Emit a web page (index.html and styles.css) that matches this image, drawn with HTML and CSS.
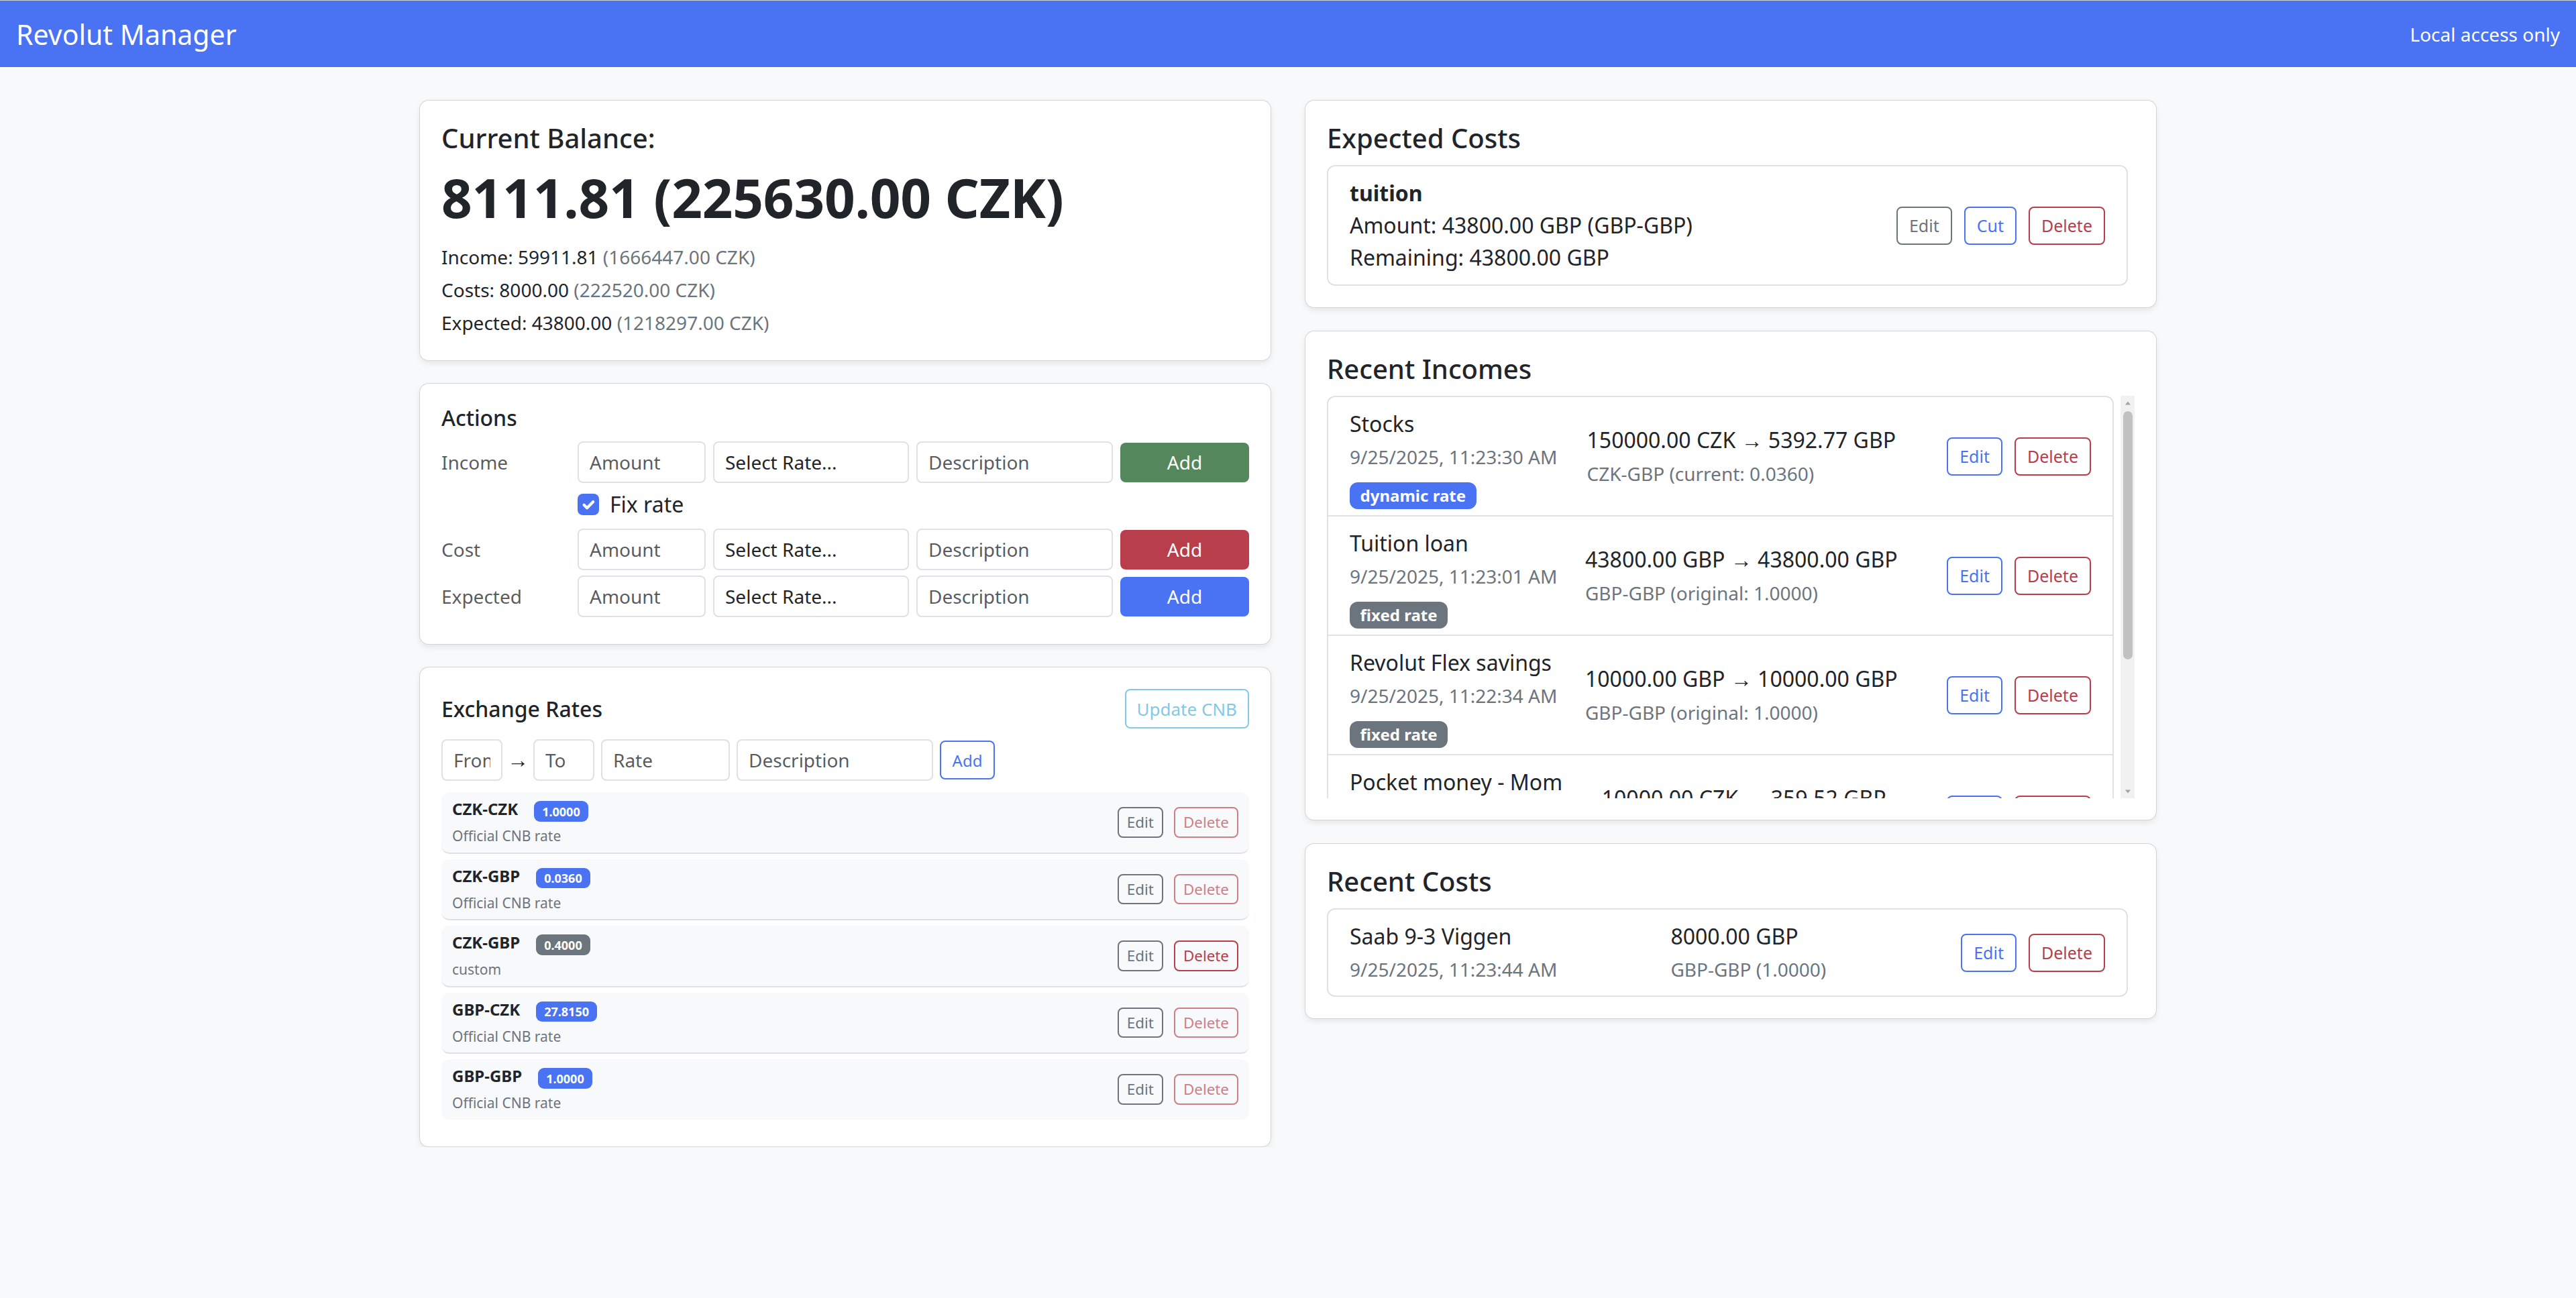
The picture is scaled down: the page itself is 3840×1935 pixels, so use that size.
FILE: index.html
```html
<!DOCTYPE html>
<html lang="en">
<head>
<meta charset="utf-8">
<title>Revolut Manager</title>
<link rel="stylesheet" href="styles.css">
</head>
<body>
<header class="topbar">
  <span class="brand">Revolut Manager</span>
  <span class="access">Local access only</span>
</header>

<main class="layout">
  <div class="col">
    <section class="card">
      <h5 class="card-title">Current Balance:</h5>
      <div class="balance-big">8111.81 (225630.00 CZK)</div>
      <div class="stat"><span class="sm">Income: 59911.81 <span class="muted">(1666447.00 CZK)</span></span></div>
      <div class="stat"><span class="sm">Costs: 8000.00 <span class="muted">(222520.00 CZK)</span></span></div>
      <div class="stat"><span class="sm">Expected: 43800.00 <span class="muted">(1218297.00 CZK)</span></span></div>
    </section>

    <section class="card">
      <h6 class="card-sub">Actions</h6>
      <div class="act-row">
        <label class="act-label">Income</label>
        <input class="field" placeholder="Amount">
        <select class="field sel"><option>Select Rate...</option></select>
        <input class="field" placeholder="Description">
        <button class="btn-add green">Add</button>
      </div>
      <div class="fix-row">
        <span class="check"><svg viewBox="0 0 20 20" width="32" height="32"><path d="M6 10.5l2.8 2.8L14.5 7.5" fill="none" stroke="#fff" stroke-width="2.6" stroke-linecap="round" stroke-linejoin="round"/></svg></span>
        <label class="fix-label">Fix rate</label>
      </div>
      <div class="act-row">
        <label class="act-label">Cost</label>
        <input class="field" placeholder="Amount">
        <select class="field sel"><option>Select Rate...</option></select>
        <input class="field" placeholder="Description">
        <button class="btn-add red">Add</button>
      </div>
      <div class="act-row">
        <label class="act-label">Expected</label>
        <input class="field" placeholder="Amount">
        <select class="field sel"><option>Select Rate...</option></select>
        <input class="field" placeholder="Description">
        <button class="btn-add blue">Add</button>
      </div>
    </section>

    <section class="card">
      <div class="rates-head">
        <h6 class="card-sub flush">Exchange Rates</h6>
        <button class="btn-update" disabled>Update CNB</button>
      </div>
      <div class="rate-form">
        <input class="field rf-from" placeholder="From">
        <span class="arrow">→</span>
        <input class="field rf-to" placeholder="To">
        <input class="field rf-rate" placeholder="Rate">
        <input class="field rf-desc" placeholder="Description">
        <button class="btn-outline-add">Add</button>
      </div>

      <div class="rate-item">
        <div class="ri-left">
          <div class="ri-name">CZK-CZK<span class="rbadge blue-bg">1.0000</span></div>
          <div class="ri-desc">Official CNB rate</div>
        </div>
        <div class="ri-btns"><button class="rbtn edit">Edit</button><button class="rbtn del" disabled>Delete</button></div>
      </div>
      <div class="rate-item">
        <div class="ri-left">
          <div class="ri-name">CZK-GBP<span class="rbadge blue-bg">0.0360</span></div>
          <div class="ri-desc">Official CNB rate</div>
        </div>
        <div class="ri-btns"><button class="rbtn edit">Edit</button><button class="rbtn del" disabled>Delete</button></div>
      </div>
      <div class="rate-item">
        <div class="ri-left">
          <div class="ri-name">CZK-GBP<span class="rbadge gray-bg">0.4000</span></div>
          <div class="ri-desc">custom</div>
        </div>
        <div class="ri-btns"><button class="rbtn edit">Edit</button><button class="rbtn del">Delete</button></div>
      </div>
      <div class="rate-item">
        <div class="ri-left">
          <div class="ri-name">GBP-CZK<span class="rbadge blue-bg">27.8150</span></div>
          <div class="ri-desc">Official CNB rate</div>
        </div>
        <div class="ri-btns"><button class="rbtn edit">Edit</button><button class="rbtn del" disabled>Delete</button></div>
      </div>
      <div class="rate-item">
        <div class="ri-left">
          <div class="ri-name">GBP-GBP<span class="rbadge blue-bg">1.0000</span></div>
          <div class="ri-desc">Official CNB rate</div>
        </div>
        <div class="ri-btns"><button class="rbtn edit">Edit</button><button class="rbtn del" disabled>Delete</button></div>
      </div>
    </section>
  </div>

  <div class="col right">
    <section class="card">
      <h5 class="card-title">Expected Costs</h5>
      <div class="lg inset">
        <div class="lg-item">
          <div>
            <div class="bold">tuition</div>
            <div>Amount: 43800.00 GBP (GBP-GBP)</div>
            <div>Remaining: 43800.00 GBP</div>
          </div>
          <div class="btns">
            <button class="sbtn sec">Edit</button><button class="sbtn pri">Cut</button><button class="sbtn dan">Delete</button>
          </div>
        </div>
      </div>
    </section>

    <section class="card">
      <h5 class="card-title">Recent Incomes</h5>
      <div class="inc-wrap">
        <div class="inc-scroll">
          <div class="lg">
            <div class="lg-item">
              <div class="li-left">
                <div>Stocks</div>
                <div><span class="sm muted">9/25/2025, 11:23:30 AM</span></div>
                <div class="badge-line"><span class="tbadge blue-bg">dynamic rate</span></div>
              </div>
              <div class="li-mid">
                <div>150000.00 CZK <span class="arr">→</span> 5392.77 GBP</div>
                <div><span class="sm muted">CZK-GBP (current: 0.0360)</span></div>
              </div>
              <div class="btns"><button class="sbtn pri">Edit</button><button class="sbtn dan">Delete</button></div>
            </div>
            <div class="lg-item">
              <div class="li-left">
                <div>Tuition loan</div>
                <div><span class="sm muted">9/25/2025, 11:23:01 AM</span></div>
                <div class="badge-line"><span class="tbadge gray-bg">fixed rate</span></div>
              </div>
              <div class="li-mid">
                <div>43800.00 GBP <span class="arr">→</span> 43800.00 GBP</div>
                <div><span class="sm muted">GBP-GBP (original: 1.0000)</span></div>
              </div>
              <div class="btns"><button class="sbtn pri">Edit</button><button class="sbtn dan">Delete</button></div>
            </div>
            <div class="lg-item">
              <div class="li-left">
                <div>Revolut Flex savings</div>
                <div><span class="sm muted">9/25/2025, 11:22:34 AM</span></div>
                <div class="badge-line"><span class="tbadge gray-bg">fixed rate</span></div>
              </div>
              <div class="li-mid">
                <div>10000.00 GBP <span class="arr">→</span> 10000.00 GBP</div>
                <div><span class="sm muted">GBP-GBP (original: 1.0000)</span></div>
              </div>
              <div class="btns"><button class="sbtn pri">Edit</button><button class="sbtn dan">Delete</button></div>
            </div>
            <div class="lg-item">
              <div class="li-left">
                <div>Pocket money - Mom</div>
                <div><span class="sm muted">9/25/2025, 11:22:05 AM</span></div>
                <div class="badge-line"><span class="tbadge gray-bg">fixed rate</span></div>
              </div>
              <div class="li-mid">
                <div>10000.00 CZK <span class="arr">→</span> 359.52 GBP</div>
                <div><span class="sm muted">CZK-GBP (original: 0.0360)</span></div>
              </div>
              <div class="btns"><button class="sbtn pri">Edit</button><button class="sbtn dan">Delete</button></div>
            </div>
          </div>
        </div>
        <div class="fake-sb">
          <div class="sb-arrow"><svg viewBox="0 0 10 10" width="10" height="10"><path d="M1 7.5L5 2.5L9 7.5Z" fill="#a3a3a3"/></svg></div>
          <div class="sb-thumb"></div>
          <div class="sb-space"></div>
          <div class="sb-arrow"><svg viewBox="0 0 10 10" width="10" height="10"><path d="M1 2.5L5 7.5L9 2.5Z" fill="#a3a3a3"/></svg></div>
        </div>
      </div>
    </section>

    <section class="card">
      <h5 class="card-title">Recent Costs</h5>
      <div class="lg inset">
        <div class="lg-item">
          <div class="li-left">
            <div>Saab 9-3 Viggen</div>
            <div><span class="sm muted">9/25/2025, 11:23:44 AM</span></div>
          </div>
          <div class="li-mid">
            <div>8000.00 GBP</div>
            <div><span class="sm muted">GBP-GBP (1.0000)</span></div>
          </div>
          <div class="btns"><button class="sbtn pri">Edit</button><button class="sbtn dan">Delete</button></div>
        </div>
      </div>
    </section>
  </div>
</main>
</body>
</html>
```

FILE: styles.css
```css
* { box-sizing: border-box; }

body {
  margin: 0;
  background: #f8f9fa;
  font-family: "Noto Sans", "Open Sans", sans-serif;
  font-size: 32px;
  line-height: 1.5;
  color: #212529;
}

.topbar {
  height: 100px;
  border-top: 1px solid #cfd2d8;
  background: #4a73f4;
  color: #fff;
  display: flex;
  align-items: center;
  justify-content: space-between;
  padding: 0 24px;
}
.brand { font-size: 41px; line-height: 60px; }
.access { font-size: 28px; line-height: 42px; }

.layout {
  width: 2590px;
  margin: 49px auto 0;
  display: grid;
  grid-template-columns: 1fr 1fr;
  column-gap: 50px;
  align-items: start;
}
.col { display: flex; flex-direction: column; gap: 33px; }
.col.right { gap: 34px; }

.card {
  background: #fff;
  border: 1px solid rgba(0, 0, 0, .16);
  border-radius: 14px;
  box-shadow: 0 4px 8px rgba(0, 0, 0, .075);
  padding: 32px;
}
.card-title { font-size: 40px; font-weight: 500; line-height: 48px; margin: 0 0 16px; }
.card-sub { font-size: 32px; font-weight: 500; line-height: 38.4px; margin: 0 0 16px; }
.card-sub.flush { margin: 0; }

.balance-big { font-size: 80px; font-weight: 700; line-height: 96px; margin-bottom: 16px; letter-spacing: -0.2px; }
.stat { line-height: 48px; }
.sm { font-size: 28px; }
.muted { color: #6c757d; }
.bold { font-weight: 700; }

/* actions */
.act-row {
  display: grid;
  grid-template-columns: 192px 191px 292px 293px 1fr;
  column-gap: 11px;
  align-items: center;
  margin-bottom: 8px;
}
.act-label { font-size: 28px; color: rgba(33, 37, 41, .75); }
.field {
  height: 62px;
  width: 100%;
  min-width: 0;
  font-family: inherit;
  font-size: 28px;
  line-height: 1.5;
  padding: 8px 16px;
  border: 2px solid #dee2e6;
  border-radius: 8px;
  background: #fff;
  color: #212529;
  outline: none;
}
.field::placeholder { color: rgba(33, 37, 41, .75); }
.sel { appearance: none; -webkit-appearance: none; }
.btn-add {
  height: 59px;
  font-family: inherit;
  font-size: 28px;
  color: #fff;
  border: 0;
  border-radius: 8px;
}
.green { background: #54885c; }
.red { background: #b73e4a; }
.blue { background: #4a73f4; }

.fix-row {
  display: flex;
  align-items: flex-start;
  padding-left: 203px;
  height: 48px;
  margin-bottom: 12px;
}
.check {
  width: 32px;
  height: 32px;
  margin-top: 8px;
  border-radius: 8px;
  background: #4a73f4;
  display: flex;
}
.fix-label { margin-left: 16px; font-size: 32px; line-height: 48px; }

/* exchange rates */
.rates-head {
  display: flex;
  justify-content: space-between;
  align-items: center;
  margin-bottom: 16px;
}
.btn-update {
  height: 59px;
  padding: 0 16px;
  font-family: inherit;
  font-size: 26px;
  color: #40abde;
  background: #fff;
  border: 2px solid #40abde;
  border-radius: 8px;
  opacity: .65;
}
.rate-form { display: flex; align-items: center; gap: 10px; margin-bottom: 17px; }
.rf-from, .rf-to { width: 91px; }
.rf-rate { width: 192px; }
.rf-desc { width: 293px; }
.arrow {
  width: 32px;
  margin: 0 -3px;
  text-align: center;
  font-family: "Liberation Sans", sans-serif;
  font-size: 32px;
  line-height: 42px;
}
.arr { font-family: "Liberation Sans", sans-serif; }
.btn-outline-add {
  width: 82px;
  height: 58px;
  font-family: inherit;
  font-size: 24px;
  color: #4a73f4;
  background: #fff;
  border: 2px solid #4a73f4;
  border-radius: 8px;
}

.rate-item {
  display: flex;
  align-items: center;
  justify-content: space-between;
  height: 91.5px;
  padding: 0 16px;
  margin-bottom: 8px;
  background: #f8f9fa;
  border-bottom: 2px solid #dee2e6;
  border-radius: 12px;
}
.rate-item:last-child { border-bottom: 0; height: 89.5px; }
.ri-name { font-size: 24px; font-weight: 700; line-height: 30px; height: 30px; }
.ri-desc { font-size: 21px; line-height: 30px; margin-top: 10px; color: #6c757d; }
.rbadge {
  display: inline-block;
  margin-left: 24px;
  padding: 6.3px 12px;
  font-size: 18px;
  font-weight: 700;
  line-height: 1;
  color: #fff;
  border-radius: 9px;
  vertical-align: -1.5px;
}
.blue-bg { background: #4a73f4; }
.gray-bg { background: #6c757d; }
.ri-btns { display: flex; gap: 16px; }
.rbtn {
  font-family: inherit;
  font-size: 22.4px;
  line-height: 1.5;
  padding: 4px 12px;
  border: 2px solid;
  border-radius: 8px;
  background: transparent;
}
.rbtn.edit { color: #6c757d; border-color: #6c757d; }
.rbtn.del { color: #b73e4a; border-color: #b73e4a; }
.rbtn:disabled { opacity: .65; }

/* list groups */
.lg { border: 2px solid #dee2e6; border-radius: 12px; }
.lg.inset { margin-right: 10px; }
.lg-item {
  display: flex;
  align-items: center;
  justify-content: space-between;
  padding: 16px 32px;
}
.lg-item + .lg-item { border-top: 2px solid #dee2e6; }
.btns { display: flex; gap: 18px; margin-left: 32px; }
.sbtn {
  font-family: inherit;
  font-size: 25px;
  line-height: 37px;
  padding: 8px 17px;
  border: 2px solid;
  border-radius: 8px;
  background: #fff;
}
.sbtn.sec { color: #6c757d; border-color: #6c757d; }
.sbtn.pri { color: #4a73f4; border-color: #4a73f4; }
.sbtn.dan { color: #b73e4a; border-color: #b73e4a; }

.badge-line { height: 48px; padding-top: 8px; }
.tbadge {
  display: inline-block;
  padding: 8.4px 15.6px;
  font-size: 24px;
  font-weight: 700;
  line-height: 1;
  color: #fff;
  border-radius: 12px;
}

.inc-wrap { display: flex; height: 600px; }
.inc-scroll { flex: 1; overflow: hidden; margin-right: 10px; }
.inc-scroll .lg { border-bottom-left-radius: 0; border-bottom-right-radius: 0; }
.fake-sb {
  width: 21px;
  background: #f1f1f1;
  display: flex;
  flex-direction: column;
  align-items: center;
}
.sb-arrow { height: 21px; display: flex; align-items: center; justify-content: center; }
.sb-thumb { width: 14px; height: 370px; margin-top: 2px; background: #c1c1c1; border-radius: 7px; }
.sb-space { flex: 1; }
```
